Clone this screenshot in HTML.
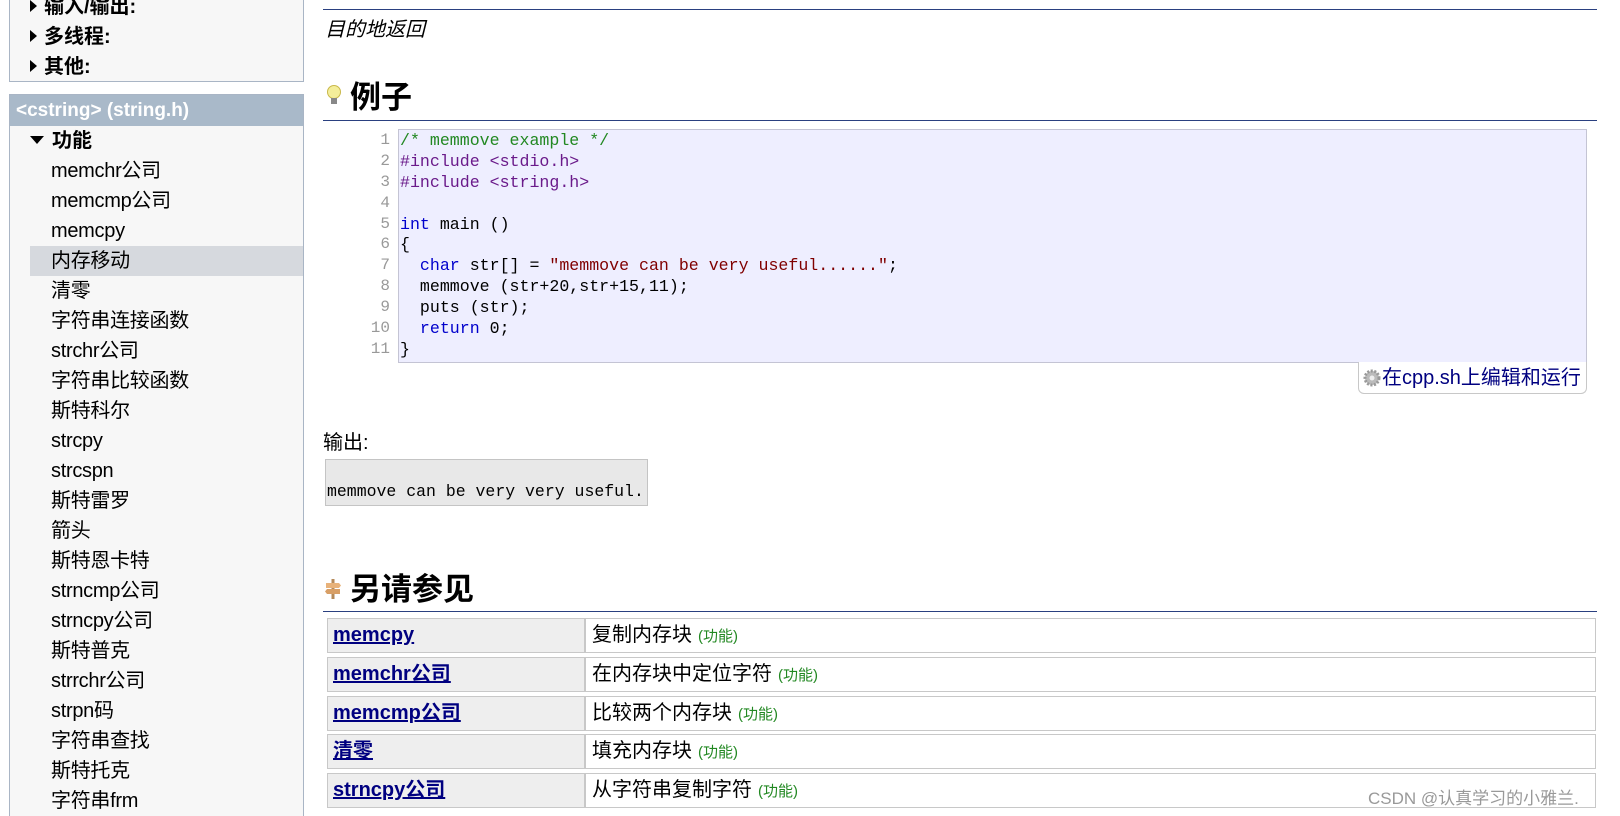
<!DOCTYPE html>
<html style="overflow:hidden;height:816px"><head><meta charset="utf-8">
<style>
*{margin:0;padding:0;box-sizing:border-box}
body{width:1620px;height:816px;overflow:hidden;background:#fff;position:relative;font-family:"Liberation Sans","Noto Sans CJK SC",sans-serif;color:#000}
.a{position:absolute;white-space:nowrap}
.sb{position:absolute;left:9px;width:295px;background:#f7f7f7;border:1px solid #a9b5c5}
.tri{display:inline-block;width:0;height:0;border-top:6px solid transparent;border-bottom:6px solid transparent;border-left:7px solid #000;margin-right:7px;vertical-align:middle;position:relative;top:-2px}
.trid{display:inline-block;width:0;height:0;border-left:7px solid transparent;border-right:7px solid transparent;border-top:8px solid #000;margin-right:8px;vertical-align:middle;position:relative;top:-2px}
.it{position:absolute;left:41px;font-size:20px;line-height:30px;letter-spacing:-0.3px}
.mono{font-family:"Liberation Mono","DejaVu Sans Mono","Noto Sans CJK SC",monospace}
.code{position:absolute;left:398px;top:129px;width:1189px;height:234px;background:#eeeeff;border:1px solid #c4c4d4}
.ln{position:absolute;right:1232px;width:40px;text-align:right;color:#999;font-size:16px}
.cl{position:absolute;left:400px;font-size:16.6px;white-space:pre}
.cm{color:#228822}.pp{color:#6a1a8a}.kw{color:#0000cc}.st{color:#800000}
h2{position:absolute;font-size:31px;font-weight:bold;line-height:36px}
.hl{position:absolute;left:323px;width:1274px;height:1px;background:#2a4080}
.row{position:absolute;left:327px;width:1269px;height:35px;border:1px solid #c8c8c8;background:#fff}
.row .l{position:absolute;left:0;top:0;width:258px;height:33px;background:#eee;border-right:2px solid #c8c8c8;padding-left:5px;font-size:20px;font-weight:bold;line-height:33px}
.row .l span{color:#000080;text-decoration:underline}
.row .r{position:absolute;left:264px;top:0;font-size:20px;line-height:33px}
.row .r small{font-size:15px;color:#228822;margin-left:6px}
</style></head><body>

<div class="sb" style="top:-5px;height:87px">
  <div class="a" style="left:20px;top:-4px;font-size:20px;font-weight:bold;line-height:30px"><span class="tri"></span>输入/输出:</div>
  <div class="a" style="left:20px;top:26px;font-size:20px;font-weight:bold;line-height:30px"><span class="tri"></span>多线程:</div>
  <div class="a" style="left:20px;top:56px;font-size:20px;font-weight:bold;line-height:30px"><span class="tri"></span>其他:</div>
</div>

<div class="sb" style="top:94px;height:722px;border-bottom:none">
  <div style="position:absolute;left:0;top:0;width:293px;height:31px;background:#a9b9c9;color:#fff;font-weight:bold;font-size:19px;line-height:31px;padding-left:6px">&lt;cstring&gt; (string.h)</div>
  <div class="a" style="left:20px;top:31px;font-size:20px;font-weight:bold;line-height:30px"><span class="trid"></span>功能</div>
  <div style="position:absolute;left:20px;top:151px;width:273px;height:30px;background:#d6d9de"></div>
  <div class="it" style="top:61px">memchr公司</div>
  <div class="it" style="top:91px">memcmp公司</div>
  <div class="it" style="top:121px">memcpy</div>
  <div class="it" style="top:151px">内存移动</div>
  <div class="it" style="top:181px">清零</div>
  <div class="it" style="top:211px">字符串连接函数</div>
  <div class="it" style="top:241px">strchr公司</div>
  <div class="it" style="top:271px">字符串比较函数</div>
  <div class="it" style="top:301px">斯特科尔</div>
  <div class="it" style="top:331px">strcpy</div>
  <div class="it" style="top:361px">strcspn</div>
  <div class="it" style="top:391px">斯特雷罗</div>
  <div class="it" style="top:421px">箭头</div>
  <div class="it" style="top:451px">斯特恩卡特</div>
  <div class="it" style="top:481px">strncmp公司</div>
  <div class="it" style="top:511px">strncpy公司</div>
  <div class="it" style="top:541px">斯特普克</div>
  <div class="it" style="top:571px">strrchr公司</div>
  <div class="it" style="top:601px">strpn码</div>
  <div class="it" style="top:631px">字符串查找</div>
  <div class="it" style="top:661px">斯特托克</div>
  <div class="it" style="top:691px">字符串frm</div>
</div>

<div class="hl" style="top:9px"></div>
<div class="a" style="left:325px;top:17px;font-size:20px;font-style:italic;line-height:26px">目的地返回</div>

<svg class="a" style="left:326px;top:84px" width="16" height="24" viewBox="0 0 16 24"><circle cx="8" cy="8" r="6.5" fill="#f4ee9a" stroke="#c9b84a"/><rect x="5" y="14" width="6" height="6" fill="#888"/></svg>
<h2 style="left:350px;top:80px">例子</h2>
<div class="hl" style="top:120px"></div>

<div class="code"></div>
<div class="mono">
<div class="ln a" style="left:350px;top:131px">1</div>
<div class="ln a" style="left:350px;top:152px">2</div>
<div class="ln a" style="left:350px;top:173px">3</div>
<div class="ln a" style="left:350px;top:194px">4</div>
<div class="ln a" style="left:350px;top:215px">5</div>
<div class="ln a" style="left:350px;top:235px">6</div>
<div class="ln a" style="left:350px;top:256px">7</div>
<div class="ln a" style="left:350px;top:277px">8</div>
<div class="ln a" style="left:350px;top:298px">9</div>
<div class="ln a" style="left:350px;top:319px">10</div>
<div class="ln a" style="left:350px;top:340px">11</div>
<div class="cl" style="top:131px"><span class="cm">/* memmove example */</span></div>
<div class="cl" style="top:152px"><span class="pp">#include &lt;stdio.h&gt;</span></div>
<div class="cl" style="top:173px"><span class="pp">#include &lt;string.h&gt;</span></div>
<div class="cl" style="top:215px"><span class="kw">int</span> main ()</div>
<div class="cl" style="top:235px">{</div>
<div class="cl" style="top:256px">  <span class="kw">char</span> str[] = <span class="st">"memmove can be very useful......"</span>;</div>
<div class="cl" style="top:277px">  memmove (str+20,str+15,11);</div>
<div class="cl" style="top:298px">  puts (str);</div>
<div class="cl" style="top:319px">  <span class="kw">return</span> 0;</div>
<div class="cl" style="top:340px">}</div>
</div>

<div class="a" style="left:1358px;top:362px;width:229px;height:32px;border:1px solid #c8c8c8;border-top:none;border-radius:0 0 6px 6px;background:#fff"></div>
<svg class="a" style="left:1363px;top:369px" width="18" height="18" viewBox="0 0 18 18"><circle cx="9" cy="9" r="7" fill="#bbb" stroke="#999" stroke-dasharray="2 1.5" stroke-width="3"/><circle cx="9" cy="9" r="2.5" fill="#eee"/></svg>
<div class="a" style="left:1382px;top:364px;font-size:20px;line-height:28px;color:#000080">在cpp.sh上编辑和运行</div>

<div class="a" style="left:323px;top:430px;font-size:20px;line-height:26px">输出:</div>
<div class="a" style="left:325px;top:459px;width:323px;height:47px;background:#e8e8e8;border:1px solid #c4c4c4"></div>
<div class="a mono" style="left:327px;top:482px;font-size:16.5px;line-height:20px">memmove can be very very useful.</div>

<svg class="a" style="left:324px;top:578px" width="18" height="22" viewBox="0 0 18 22"><rect x="7.5" y="1" width="3" height="20" fill="#b58a5a"/><path d="M2 5h13l2 2.5-2 2.5H2z" fill="#e8b27a"/><path d="M16 11H3l-2 2.5 2 2.5h13z" fill="#d89f66"/></svg>
<h2 style="left:350px;top:572px">另请参见</h2>
<div class="hl" style="top:611px"></div>

<div class="row" style="top:618px"><div class="l"><span>memcpy</span></div><div class="r">复制内存块<small>(功能)</small></div></div>
<div class="row" style="top:657px"><div class="l"><span>memchr公司</span></div><div class="r">在内存块中定位字符<small>(功能)</small></div></div>
<div class="row" style="top:696px"><div class="l"><span>memcmp公司</span></div><div class="r">比较两个内存块<small>(功能)</small></div></div>
<div class="row" style="top:734px"><div class="l"><span>清零</span></div><div class="r">填充内存块<small>(功能)</small></div></div>
<div class="row" style="top:773px"><div class="l"><span>strncpy公司</span></div><div class="r">从字符串复制字符<small>(功能)</small></div></div>

<div class="a" style="left:1368px;top:788px;font-size:17px;line-height:22px;color:#999">CSDN @认真学习的小雅兰.</div>
</body></html>
